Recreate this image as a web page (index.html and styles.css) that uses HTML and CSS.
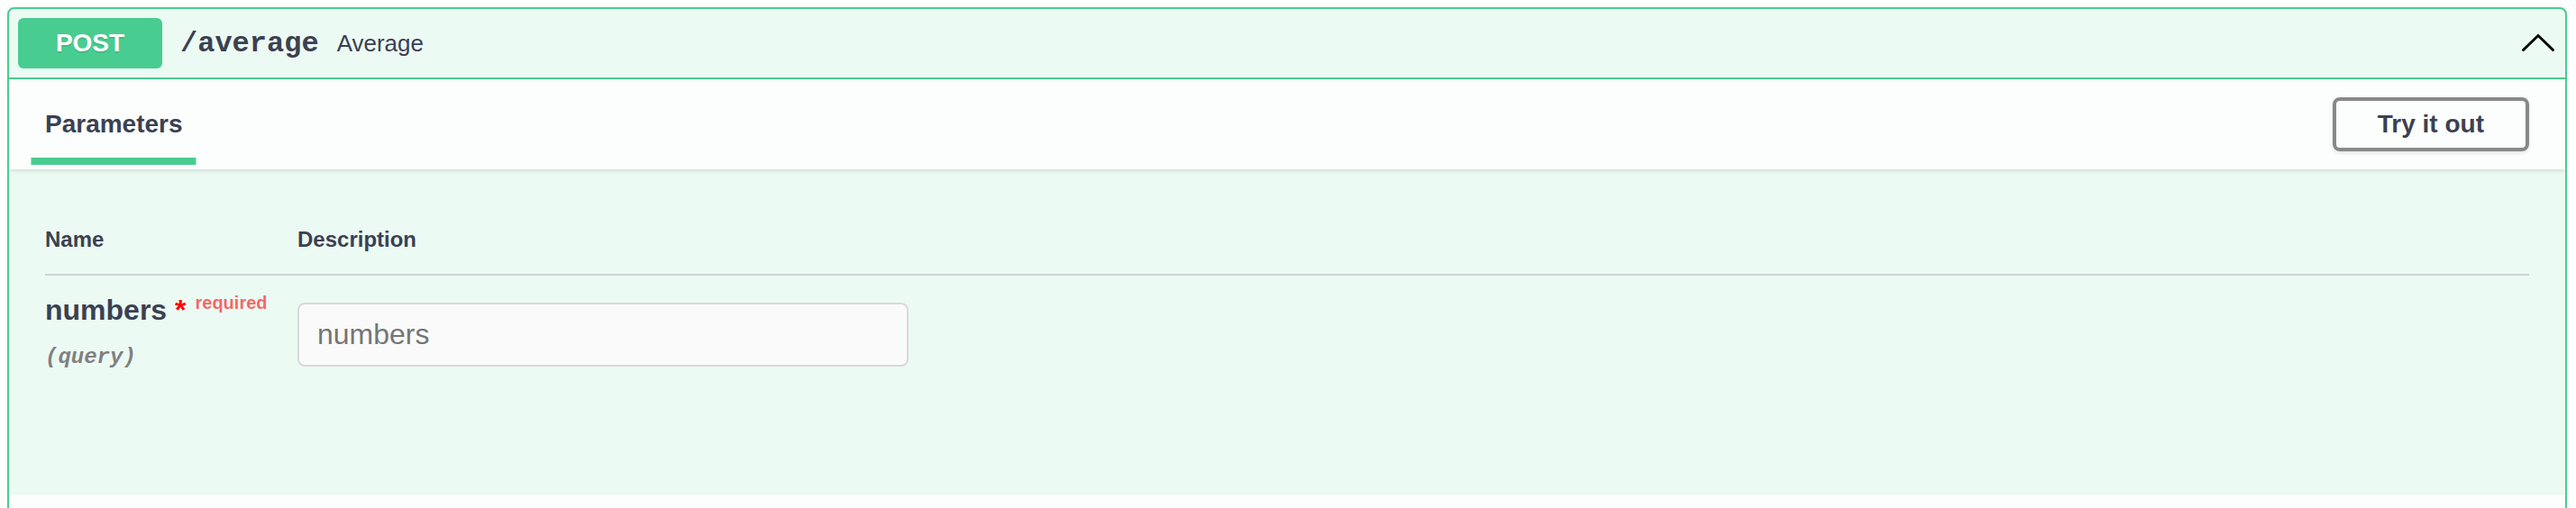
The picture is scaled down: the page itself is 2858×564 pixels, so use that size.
FILE: index.html
```html
<!DOCTYPE html>
<html lang="en">
<head>
<meta charset="utf-8">
<title>POST /average</title>
<link rel="stylesheet" href="styles.css">
</head>
<body>
<div class="opblock">
  <div class="summary">
    <span class="method">POST</span>
    <span class="path">/average</span>
    <span class="summary-desc">Average</span>
    <svg class="arrow" width="40" height="40" viewBox="0 0 40 40" aria-hidden="true">
      <polyline points="3.5,27.5 20,11.5 36.5,27.5" fill="none" stroke="#000" stroke-width="3" stroke-linejoin="miter" stroke-linecap="round"/>
    </svg>
  </div>
  <div class="section-header">
    <h4 class="tab-title"><span class="tab-label">Parameters</span></h4>
    <button class="try-out">Try it out</button>
  </div>
  <div class="table-container">
    <table class="parameters">
      <thead>
        <tr>
          <th class="col-name">Name</th>
          <th class="col-desc">Description</th>
        </tr>
      </thead>
      <tbody>
        <tr>
          <td class="col-name">
            <div class="param-name">numbers<span class="star">&nbsp;*</span><span class="req">required</span></div>
            <div class="param-type"></div>
            <div class="param-in">(query)</div>
          </td>
          <td class="col-desc">
            <input class="param-input" type="text" placeholder="numbers">
          </td>
        </tr>
      </tbody>
    </table>
  </div>
  <div class="section-header next"></div>
</div>
</body>
</html>
```

FILE: styles.css
```css
html, body {
  background: #fff;
}
body {
  margin: 8px 10px 0 8px;
  font-family: "Liberation Sans", Arial, sans-serif;
  color: #3b4151;
}
.opblock {
  border: 2px solid #49cc90;
  border-radius: 8px;
  background: rgba(73, 204, 144, 0.1);
  box-shadow: 0 0 6px rgba(0, 0, 0, 0.19);
  overflow: hidden;
}
.summary {
  display: flex;
  align-items: center;
  padding: 10px;
  border-bottom: 2px solid #49cc90;
}
.method {
  display: block;
  width: 160px;
  padding: 12px 0;
  line-height: 32px;
  font-size: 28px;
  font-weight: 700;
  text-align: center;
  color: #fff;
  background: #49cc90;
  border-radius: 6px;
  text-shadow: 0 2px 0 rgba(0, 0, 0, 0.1);
}
.path {
  padding: 0 20px;
  font-family: "Liberation Mono", "Courier New", monospace;
  font-size: 32px;
  font-weight: 700;
  color: #3b4151;
}
.summary-desc {
  flex: 1;
  font-size: 26px;
  color: #3b4151;
}
.arrow {
  flex-shrink: 0;
  display: block;
}
.section-header {
  display: flex;
  align-items: center;
  box-sizing: border-box;
  min-height: 100px;
  padding: 16px 40px;
  background: rgba(255, 255, 255, 0.8);
  box-shadow: 0 2px 4px rgba(0, 0, 0, 0.1);
}
.tab-title {
  flex: 1;
  margin: 0;
  font-size: 28px;
  font-weight: 700;
  color: #3b4151;
}
.tab-label {
  position: relative;
}
.tab-label::after {
  content: "";
  position: absolute;
  left: 50%;
  bottom: -30px;
  width: 120%;
  height: 8px;
  transform: translateX(-50%);
  background: #49cc90;
}
.try-out {
  font-family: "Liberation Sans", Arial, sans-serif;
  font-size: 28px;
  font-weight: 700;
  line-height: 32px;
  color: #3b4151;
  background: transparent;
  border: 4px solid #888;
  border-radius: 8px;
  padding: 10px 46px;
  box-shadow: 0 2px 4px rgba(0, 0, 0, 0.1);
}
.table-container {
  padding: 40px 40px 112px;
}
.parameters {
  width: 100%;
  border-collapse: separate;
  border-spacing: 0;
}
.parameters th {
  padding: 24px 0;
  font-size: 24px;
  font-weight: 700;
  text-align: left;
  color: #3b4151;
  border-bottom: 2px solid rgba(59, 65, 81, 0.2);
}
.parameters td {
  padding: 20px 0;
  vertical-align: top;
}
.col-name {
  width: 280px;
}
.param-name {
  font-size: 32px;
  font-weight: 700;
  color: #3b4151;
}
.star {
  color: red;
}
.req {
  position: relative;
  top: -12px;
  padding: 10px;
  font-size: 20px;
  color: rgba(255, 0, 0, 0.6);
}
.param-type {
  padding: 10px 0;
}
.param-in {
  font-family: "Liberation Mono", "Courier New", monospace;
  font-size: 24px;
  font-style: italic;
  font-weight: 700;
  color: gray;
}
.param-input {
  display: block;
  box-sizing: border-box;
  width: 678px;
  height: 71px;
  margin: 10px 0;
  padding: 0 20px;
  font-family: "Liberation Sans", Arial, sans-serif;
  font-size: 32px;
  color: #3b4151;
  background: #fafafa;
  border: 2px solid #d9d9d9;
  border-radius: 8px;
  outline: none;
}
.param-input::placeholder {
  color: #757575;
}
```
